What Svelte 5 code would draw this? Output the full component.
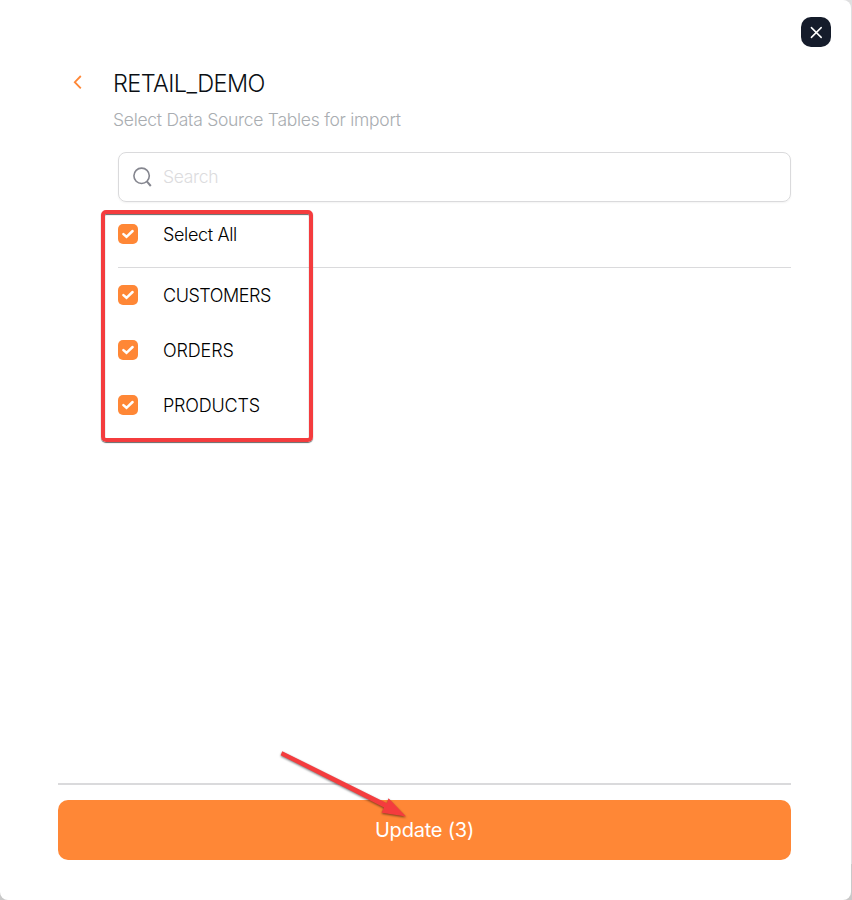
<script>
  let tables = $state([
    { name: 'CUSTOMERS', checked: true, tracking: -0.45 },
    { name: 'ORDERS', checked: true, tracking: -0.15 },
    { name: 'PRODUCTS', checked: true, tracking: -0.2 }
  ]);
  let query = $state('');
  let count = $derived(tables.filter((t) => t.checked).length);
  let all = $derived(count === tables.length);

  function toggleAll() {
    const next = !all;
    tables.forEach((t) => (t.checked = next));
  }
</script>

{#snippet box(checked)}
  <span class="box" class:on={checked}>
    {#if checked}
      <svg width="20" height="20" viewBox="0 0 20 20"><path d="M5.4 10.1 8.5 12.8 14.6 7" fill="none" stroke="#fff" stroke-width="2.5" stroke-linecap="round" /></svg>
    {/if}
  </span>
{/snippet}

<div class="page">
  <main class="dialog">
    <button class="close" aria-label="Close">
      <svg width="30" height="30" viewBox="0 0 30 30"><path d="M10.4 10.6 20.2 20.4M20.2 10.6 10.4 20.4" stroke="#fff" stroke-width="1.5" stroke-linecap="round" /></svg>
    </button>

    <header>
      <button class="back" aria-label="Back">
        <svg width="10" height="16" viewBox="0 0 10 16"><path d="M7.8 2 1.8 8.2 7.8 14.4" fill="none" stroke="#ff8736" stroke-width="1.8" /></svg>
      </button>
      <div>
        <h1>RETAIL_DEMO</h1>
        <p>Select Data Source Tables for import</p>
      </div>
    </header>

    <section class="content">
      <label class="search">
        <svg width="22" height="22" viewBox="0 0 22 22"><g fill="none" stroke="#85868f"><circle cx="9.6" cy="9.8" r="7.7" stroke-width="1.6" /><path d="m14.6 15.1 4.2 4.9" stroke-width="2" /></g></svg>
        <input placeholder="Search" bind:value={query} />
      </label>
      <button class="row select-all" onclick={toggleAll}>{@render box(all)}<span class="label">Select All</span></button>
      <div class="list">
        {#each tables as t}
          <button class="row" onclick={() => (t.checked = !t.checked)}>
            {@render box(t.checked)}<span class="label" style="letter-spacing: {t.tracking}px">{t.name}</span>
          </button>
        {/each}
      </div>
    </section>

    <footer>
      <button class="update"><span>Update ({count})</span></button>
    </footer>

    <div class="highlight"></div>
    <svg class="arrow" width="140" height="80" viewBox="0 0 140 80">
      <path d="M12.3 11.2 10.6 15.2 114 67.4 111.7 72.8 136 76.4 118.5 58.3 117 63.2Z" fill="#f43c3e" />
    </svg>
  </main>
</div>

<style>
  :global(body) { margin: 0; }
  .page {
    width: 852px; height: 900px; overflow: hidden;
    background: linear-gradient(#dfdfe0 0 864px, #c9c9c9 864px);
    font-family: "Inter", "Liberation Sans", sans-serif;
    font-weight: 300;
  }
  .dialog {
    position: relative; box-sizing: border-box;
    width: 851px; height: 900px; padding: 17px 60px 40px 58px;
    background: #fff; border-radius: 0 8px 8px 8px;
    display: flex; flex-direction: column;
  }
  button { border: 0; padding: 0; background: none; font: inherit; color: inherit; cursor: pointer; }
  svg { display: block; }
  .close {
    align-self: flex-end; margin-right: -40px;
    width: 30px; height: 30px; border-radius: 10px; background: #151c2b;
  }
  header { display: flex; padding-top: 21px; height: 84px; box-sizing: content-box; }
  .back { width: 55px; height: 16px; padding-left: 15px; margin-top: 6px; box-sizing: border-box; }
  h1 { margin: 0; font-size: 23.5px; line-height: 32px; font-weight: 300; letter-spacing: -0.6px; color: #0b0f14; white-space: nowrap; }
  p { margin: 7px 0 0; font-size: 17.5px; line-height: 26px; letter-spacing: -0.27px; color: #a9adb1; white-space: nowrap; }
  .content { margin-left: 60px; flex: 1; }
  .search {
    display: flex; align-items: center; gap: 10px; box-sizing: border-box;
    width: 673px; height: 50px; padding-left: 13px;
    border: 1px solid #dadadc; border-radius: 8px; box-shadow: 0 1px 2px #0000000d;
  }
  input {
    border: 0; outline: 0; padding: 0 0 2px; margin-left: -1px; width: 560px; background: none;
    font: inherit; font-size: 17.5px; letter-spacing: -0.3px;
  }
  input::placeholder { color: #dcdcde; opacity: 1; }
  .row { display: flex; align-items: center; gap: 25px; height: 55px; width: 100%; font-size: 18px; color: #000; }
  .select-all { height: 66px; padding-bottom: 1px; border-bottom: 1px solid #dadadc; letter-spacing: -0.35px; box-sizing: border-box; }
  .box { width: 20px; height: 20px; border-radius: 5px; box-sizing: border-box; border: 1px solid #dadadc; }
  .box.on { border: 0; background: #ff8736; }
  .list .box { margin-bottom: 2px; }
  footer { border-top: 2px solid #dadadc; padding-top: 15px; }
  .update {
    display: block; width: 733px; height: 60px; border-radius: 10px;
    background: #ff8736; color: #fff; font-size: 20px; letter-spacing: -0.2px; font-weight: 400;
  }
  .highlight {
    position: absolute; left: 101px; top: 210px; width: 212px; height: 232px; box-sizing: border-box;
    border: 4px solid #f43c3e; border-radius: 5px; pointer-events: none;
    box-shadow: 0 1px 1px #0009, inset 0 1px 1px #0009;
  }
  .arrow { position: absolute; left: 270px; top: 740px; pointer-events: none; filter: drop-shadow(0 1px 1px #0008); }
</style>
